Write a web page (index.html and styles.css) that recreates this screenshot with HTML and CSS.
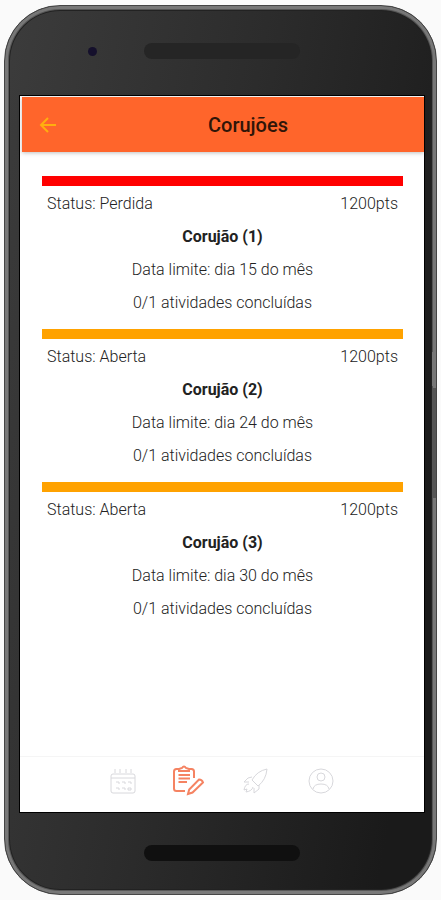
FILE: index.html
```html
<!DOCTYPE html>
<html lang="pt-BR">
<head>
<meta charset="utf-8">
<meta name="viewport" content="width=device-width, initial-scale=1">
<title>Corujões</title>
<link rel="stylesheet" href="styles.css">
</head>
<body>
<div class="phone">
  <div class="bezel bezel-top">
    <span class="camera"></span>
    <span class="slot"></span>
  </div>
  <div class="screen">
    <header class="topbar">
      <a class="back" href="#" aria-label="Voltar">
        <svg width="18" height="18" viewBox="0 0 18 18"><path d="M17 9H2M9 2L2 9l7 7"/></svg>
      </a>
      <h1 class="title">Corujões</h1>
    </header>
    <main class="list">
      <article class="card lost">
        <p class="meta"><span>Status: Perdida</span><span>1200pts</span></p>
        <h2>Corujão (1)</h2>
        <p>Data limite: dia 15 do mês</p>
        <p>0/1 atividades concluídas</p>
      </article>
      <article class="card">
        <p class="meta"><span>Status: Aberta</span><span>1200pts</span></p>
        <h2>Corujão (2)</h2>
        <p>Data limite: dia 24 do mês</p>
        <p>0/1 atividades concluídas</p>
      </article>
      <article class="card">
        <p class="meta"><span>Status: Aberta</span><span>1200pts</span></p>
        <h2>Corujão (3)</h2>
        <p>Data limite: dia 30 do mês</p>
        <p>0/1 atividades concluídas</p>
      </article>
    </main>
    <nav class="tabs">
      <a href="#" aria-label="Calendário">
        <svg width="32" height="32" viewBox="0 0 32 32"><rect x="4" y="9" width="24" height="19" rx="2"/><path d="M4 13h24M8 4v4M13 4v4M19 4v4M24 4v4M9 17h3v2M15 17h3v2M21 17h3v2M9 23h3v2M15 23h3v2M21 23h3v2H21z"/></svg>
      </a>
      <a class="active" href="#" aria-label="Atividades">
        <svg width="32" height="32" viewBox="0 0 32 32"><path d="M7 4H3.500Q1 4 1 6.500V23.500Q1 26 3.500 26H12M16 4H18.500Q21 4 21 6.500V13M6 6V4l3-1q2-3 4 0l3 1V6zM5.500 10H17M5.500 13.500H17M5.500 17H14M26 14.500q3 0 4 3L19.500 27.500 15 29l1.200-4.500z"/></svg>
      </a>
      <a href="#" aria-label="Missões">
        <svg width="32" height="32" viewBox="0 0 32 32"><path d="M13 15Q18 6 28 4 27 15 19 21L13 15M13 12L9 13l-4 4 5 0M20 20v4l-5 4v-5M10 19q-4 0-5 6l3-1-1 3q6-1 7-5"/></svg>
      </a>
      <a href="#" aria-label="Perfil">
        <svg width="32" height="32" viewBox="0 0 32 32"><circle cx="16" cy="16" r="12"/><circle cx="16" cy="12" r="4"/><path d="M8 24q1-5 8-5t8 5"/></svg>
      </a>
    </nav>
  </div>
  <div class="bezel bezel-bottom"><span class="slot"></span></div>
  <span class="side-key power"></span>
  <span class="side-key volume"></span>
</div>
</body>
</html>
```
FILE: styles.css
```css
* {
  box-sizing: border-box;
}

body {
  margin: 0;
  padding: 5px 4px;
  background: #fafafa;
  font-family: Roboto, "Liberation Sans", sans-serif;
  font-size: 16px;
  font-weight: 300;
  color: #222;
}

.phone {
  position: relative;
  display: flex;
  flex-direction: column;
  min-height: calc(100vh - 10px);
  padding: 0 8px 0 10px;
  border: 1px solid #444;
  border-radius: 56px;
  background: linear-gradient(100deg, #3c3c3c, #2c2c2c 45%, #1a1a1a 90%);
  box-shadow: inset 0 0 0 3px #777, inset 0 0 0 4px #555, inset 0 0 0 5px #222;
}

.bezel {
  display: grid;
  grid-template-columns: 1fr 156px 1fr;
  align-items: center;
}

.bezel-top {
  height: 90px;
}

.bezel-bottom {
  height: 82px;
}

.slot {
  grid-column: 2;
  height: 16px;
  border-radius: 8px;
  background: #252525;
}

.bezel-bottom .slot {
  background: #101010;
}

.camera {
  justify-self: center;
  width: 9px;
  height: 9px;
  margin-left: 26px;
  border-radius: 50%;
  background: #15102c;
}

.screen {
  flex: 1;
  display: flex;
  flex-direction: column;
  margin: 0 4px 0 5px;
  background: #fff;
  box-shadow: 0 0 0 1px #000;
}

.topbar {
  display: grid;
  grid-template-columns: 50px 1fr;
  align-items: center;
  height: 55px;
  margin: 1px 0 0 2px;
  background: #ff652b;
  box-shadow: 0 1px 4px rgba(0, 0, 0, 0.25);
}

.back {
  display: flex;
  padding-left: 17px;
}

.back svg {
  fill: none;
  stroke: #ffaf0f;
  stroke-width: 2;
}

.title {
  margin: 0;
  text-align: center;
  font-size: 20px;
  font-weight: 500;
  color: #301508;
}

.list {
  flex: 1;
  display: flex;
  flex-direction: column;
  gap: 10px;
  padding: 24px 21px 10px 22px;
}

.card {
  padding-top: 1px;
  border-top: 10px solid #ffa200;
  line-height: 33px;
  text-align: center;
}

.card.lost {
  border-color: #f00;
}

.card p,
.card h2 {
  margin: 0;
}

.card h2 {
  font-size: 16px;
  font-weight: 700;
  color: #222;
}

.meta {
  display: flex;
  justify-content: space-between;
  padding: 0 5px;
}

.tabs {
  display: flex;
  justify-content: space-between;
  height: 56px;
  padding: 8px 87px;
  border-top: 1px solid #f5f5f5;
}

.tabs a {
  height: 32px;
}

.tabs svg {
  fill: none;
  stroke: #d8d8dc;
  stroke-width: 1;
}

.tabs .active svg {
  stroke: #f58362;
  stroke-width: 2;
}

.side-key {
  position: absolute;
  right: 0;
  width: 4px;
}

.power {
  top: 39%;
  height: 34px;
  background: #777;
}

.volume {
  top: 43%;
  height: 110px;
  background: #555;
}
```
